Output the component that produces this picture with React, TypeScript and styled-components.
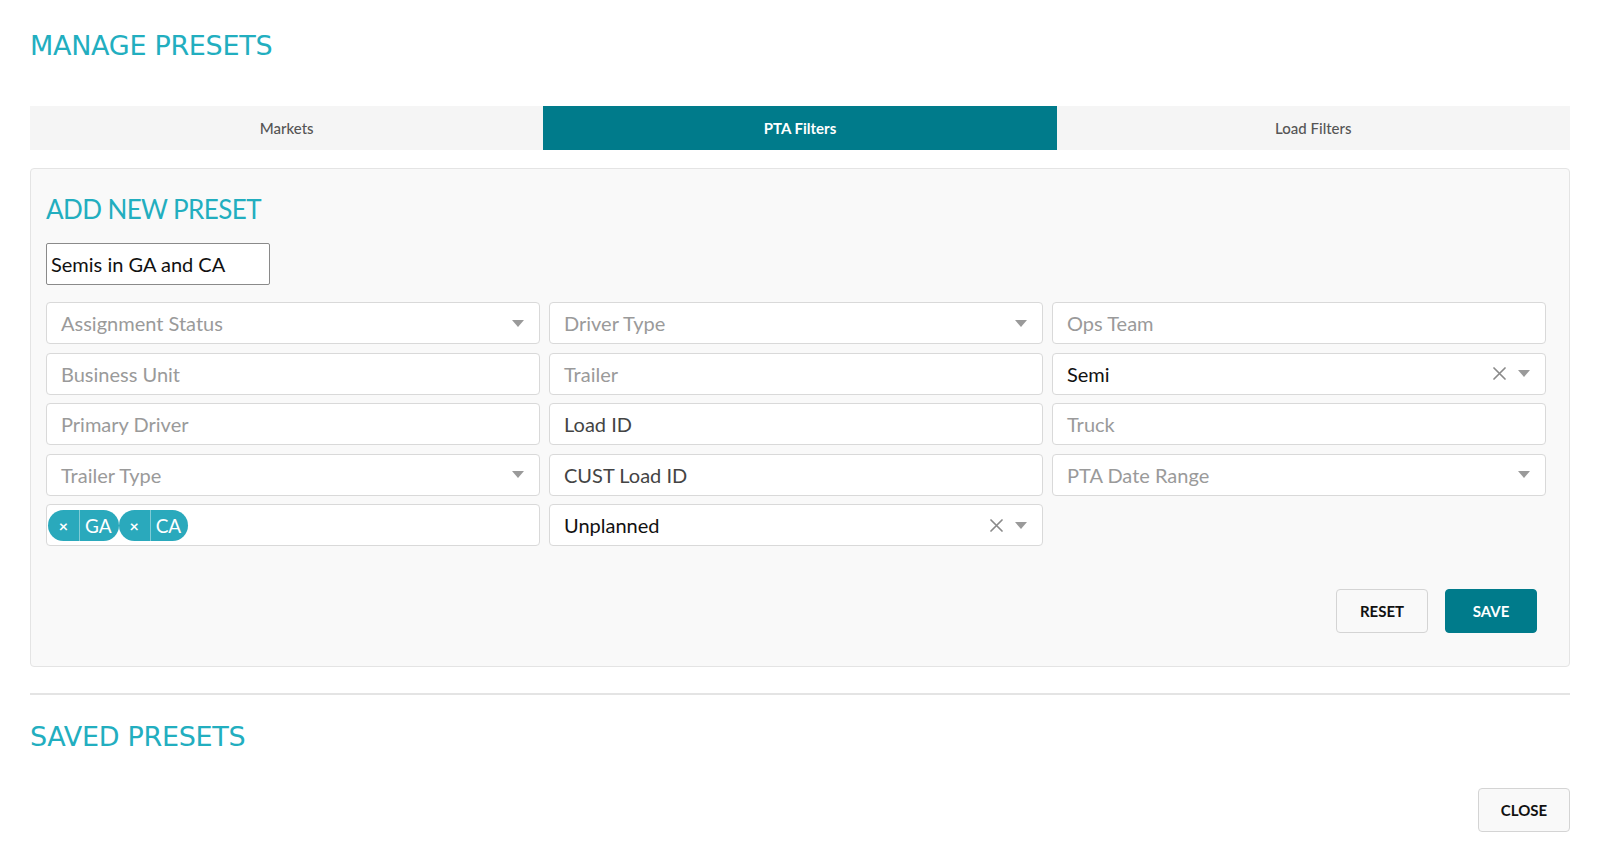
import styled, { createGlobalStyle } from "styled-components";

const GlobalStyle = createGlobalStyle`
  html, body {
    margin: 0;
    padding: 0;
    background: #ffffff;
    font-family: Lato, "Liberation Sans", sans-serif;
  }
  * {
    box-sizing: border-box;
  }
`;

const Page = styled.div`
  padding: 28px 30px 0 30px;
`;

const PageTitle = styled.h1`
  margin: 0 0 42px 0;
  font-family: "DejaVu Sans", "Open Sans", sans-serif;
  font-weight: 400;
  font-size: 27px;
  line-height: 36px;
  letter-spacing: -0.3px;
  color: #22aebf;
`;

const Tabs = styled.div`
  display: grid;
  grid-template-columns: repeat(3, 1fr);
  height: 44px;
  background: #f5f5f5;
`;

const Tab = styled.div<{ active?: boolean }>`
  display: flex;
  align-items: center;
  justify-content: center;
  font-size: 15px;
  font-weight: ${(p) => (p.active ? 700 : 500)};
  color: ${(p) => (p.active ? "#ffffff" : "#555555")};
  background: ${(p) => (p.active ? "#007b8b" : "transparent")};
`;

const Card = styled.div`
  margin-top: 18px;
  background: #f9f9f9;
  border: 1px solid #e4e4e4;
  border-radius: 4px;
  padding: 24px 32px 33px 15px;
`;

const CardTitle = styled.h2`
  margin: 0 0 18px 0;
  font-weight: 400;
  font-size: 26px;
  line-height: 32px;
  letter-spacing: -0.6px;
  color: #22aebf;
`;

const NameInput = styled.div`
  width: 224px;
  height: 42px;
  display: flex;
  align-items: center;
  padding: 0 4px;
  background: #ffffff;
  border: 1px solid #8a8a8a;
  border-radius: 2px;
  font-size: 20px;
  color: #111111;
`;

const FieldGrid = styled.div`
  margin-top: 17px;
  margin-right: -9px;
  display: grid;
  grid-template-columns: repeat(3, 1fr);
  column-gap: 9px;
  row-gap: 8.5px;
`;

const Field = styled.div`
  height: 42px;
  display: flex;
  align-items: center;
  padding: 0 14px 0 14px;
  background: #ffffff;
  border: 1px solid #d9d9d9;
  border-radius: 4px;
`;

type Tone = "placeholder" | "value" | "typed";

const toneColor: Record<Tone, string> = {
  placeholder: "#9a9a9a",
  value: "#111111",
  typed: "#444444",
};

const FieldText = styled.span<{ tone: Tone }>`
  flex: 1;
  font-size: 20px;
  color: ${(p) => toneColor[p.tone]};
`;

const TagField = styled(Field)`
  padding: 0 0 0 1px;
`;

const Blank = styled.div``;

const Chip = styled.div`
  height: 31px;
  display: flex;
  align-items: center;
  background: #2aa9bc;
  border-radius: 16px;
  color: #ffffff;
`;

const ChipRemove = styled.span`
  width: 32px;
  height: 100%;
  display: flex;
  align-items: center;
  justify-content: center;
  border-right: 1px solid #7fcbd6;
  font-size: 16px;
  font-weight: 700;
`;

const ChipLabel = styled.span`
  padding: 0 7px 0 5px;
  font-size: 19px;
`;

const Controls = styled.div`
  display: flex;
  align-items: center;
  gap: 12px;
  margin-right: 1px;
`;

const ClearIcon = styled.svg`
  width: 13px;
  height: 13px;
  display: block;
`;

const Caret = styled.span`
  width: 0;
  height: 0;
  border-left: 6.5px solid transparent;
  border-right: 6.5px solid transparent;
  border-top: 7px solid #9a9a9a;
`;

const Actions = styled.div`
  margin-top: 43px;
  display: flex;
  justify-content: flex-end;
  gap: 17px;
`;

const Button = styled.button<{ primary?: boolean }>`
  height: 44px;
  min-width: 92px;
  padding: 0 20px;
  font-family: Lato, "Liberation Sans", sans-serif;
  font-size: 15px;
  font-weight: 700;
  border-radius: 4px;
  cursor: pointer;
  color: ${(p) => (p.primary ? "#ffffff" : "#111111")};
  background: ${(p) => (p.primary ? "#007b8b" : "#f9f9f9")};
  border: 1px solid ${(p) => (p.primary ? "#007b8b" : "#d4d4d4")};
`;

const Divider = styled.hr`
  margin: 26px 0 0 0;
  border: none;
  border-top: 2px solid #e4e4e4;
`;

const SectionTitle = styled(PageTitle)`
  margin: 24px 0 0 0;
`;

const Footer = styled.div`
  margin-top: 33px;
  display: flex;
  justify-content: flex-end;
`;

type FieldSpec = {
  label: string;
  tone?: Tone;
  dropdown?: boolean;
  clearable?: boolean;
};

const fields: (FieldSpec | "tags" | null)[] = [
  { label: "Assignment Status", dropdown: true },
  { label: "Driver Type", dropdown: true },
  { label: "Ops Team" },
  { label: "Business Unit" },
  { label: "Trailer" },
  { label: "Semi", tone: "value", dropdown: true, clearable: true },
  { label: "Primary Driver" },
  { label: "Load ID", tone: "typed" },
  { label: "Truck" },
  { label: "Trailer Type", dropdown: true },
  { label: "CUST Load ID", tone: "typed" },
  { label: "PTA Date Range", dropdown: true },
  "tags",
  { label: "Unplanned", tone: "value", dropdown: true, clearable: true },
  null,
];

const states = ["GA", "CA"];

const Clear = () => (
  <ClearIcon viewBox="0 0 13 13">
    <path d="M1 1 L12 12 M12 1 L1 12" stroke="#8a8a8a" strokeWidth="1.7" strokeLinecap="round" />
  </ClearIcon>
);

const App = () => {
  return (
    <Page>
      <GlobalStyle />
      <PageTitle>MANAGE PRESETS</PageTitle>
      <Tabs>
        <Tab>Markets</Tab>
        <Tab active>PTA Filters</Tab>
        <Tab>Load Filters</Tab>
      </Tabs>
      <Card>
        <CardTitle>ADD NEW PRESET</CardTitle>
        <NameInput>Semis in GA and CA</NameInput>
        <FieldGrid>
          {fields.map((f, i) => {
            if (f === null) return <Blank key={i} />;
            if (f === "tags")
              return (
                <TagField key={i}>
                  {states.map((s) => (
                    <Chip key={s}>
                      <ChipRemove>×</ChipRemove>
                      <ChipLabel>{s}</ChipLabel>
                    </Chip>
                  ))}
                </TagField>
              );
            return (
              <Field key={i}>
                <FieldText tone={f.tone ?? "placeholder"}>{f.label}</FieldText>
                {(f.dropdown || f.clearable) && (
                  <Controls>
                    {f.clearable && <Clear />}
                    {f.dropdown && <Caret />}
                  </Controls>
                )}
              </Field>
            );
          })}
        </FieldGrid>
        <Actions>
          <Button>RESET</Button>
          <Button primary>SAVE</Button>
        </Actions>
      </Card>
      <Divider />
      <SectionTitle>SAVED PRESETS</SectionTitle>
      <Footer>
        <Button>CLOSE</Button>
      </Footer>
    </Page>
  );
};

export default App;
